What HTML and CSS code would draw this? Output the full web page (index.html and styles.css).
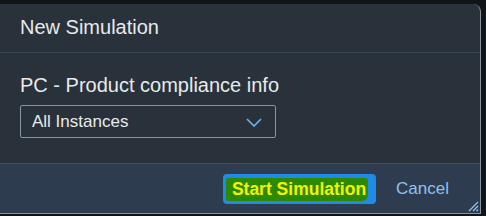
FILE: index.html
```html
<!DOCTYPE html>
<html>
<head>
<meta charset="utf-8">
<link rel="stylesheet" href="styles.css">
</head>
<body>
<div class="dialog">
  <div class="header">New Simulation</div>
  <div class="content">
    <div class="label">PC - Product compliance info</div>
    <div class="select">
      <span>All Instances</span>
      <svg class="chev" width="16" height="9" viewBox="0 0 16 9"><path d="M1 1 L8 8 L15 1" fill="none" stroke="#6fb3f0" stroke-width="1.6"/></svg>
    </div>
  </div>
  <div class="footer">
    <div class="primary"><span class="mark">Start Simulation</span></div>
    <div class="cancel">Cancel</div>
    <svg class="grip" width="12" height="12" viewBox="0 0 12 12"><path d="M11 2 L2 11 M11 6 L6 11 M11 9.5 L9.5 11" stroke="#8fc3f2" stroke-width="1.3"/></svg>
  </div>
</div>
</body>
</html>
```
FILE: styles.css
```css
html, body { margin: 0; padding: 0; }
body {
  background: #121518;
  width: 486px;
  height: 216px;
  overflow: hidden;
  font-family: "Liberation Sans", Arial, sans-serif;
  padding-top: 4px;
  box-sizing: border-box;
}
.dialog {
  width: 482px;
  margin-left: -1px;
  height: 210px;
  background: #29313a;
  border-right: 1px solid #8a949e;
  border-bottom: 1px solid #8a949e;
  border-radius: 0 8px 0 0;
  display: flex;
  flex-direction: column;
  box-sizing: border-box;
  position: relative;
}
.header {
  height: 49px;
  border-bottom: 1px solid #3b4652;
  color: #e8eaec;
  font-size: 20px;
  padding-left: 21px;
  display: flex;
  align-items: center;
  box-sizing: border-box;
  padding-bottom: 1px;
}
.content {
  height: 110px;
  padding: 20px 0 0 21px;
  box-sizing: border-box;
}
.label {
  color: #e8eaec;
  font-size: 20px;
  line-height: 24px;
}
.select {
  margin-top: 8px;
  width: 256px;
  height: 33px;
  border: 1px solid #8696a6;
  border-radius: 2px;
  box-sizing: border-box;
  display: flex;
  align-items: center;
  justify-content: space-between;
  padding: 0 13px 0 11px;
  color: #e8eaec;
  font-size: 17px;
}
.chev { margin-top: 2px; }
.footer {
  flex: 1;
  background: #2d3d4f;
  border-top: 1px solid #3d5166;
  display: flex;
  align-items: center;
  justify-content: flex-end;
  padding-right: 31px;
  gap: 20px;
  position: relative;
}
.primary {
  background: #1f8be6;
  border-radius: 4px;
  padding: 4px 8px 3px 3px;
  margin-top: 0px;
}
.mark {
  display: block;
  background: #2d8a00;
  color: #f2f500;
  font-weight: bold;
  font-size: 17.5px;
  line-height: 21px;
  padding: 1px 2px 1px 6px;
  border-radius: 2px 3px 6px 2px;
}
.cancel {
  color: #8ec2f0;
  font-size: 17px;
  margin-top: 0px;
}
.grip {
  position: absolute;
  right: 1px;
  bottom: 1px;
}
```
